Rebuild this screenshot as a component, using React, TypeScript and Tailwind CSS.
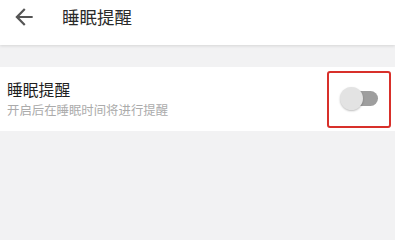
import React from "react"

const font = { fontFamily: '"Noto Sans CJK SC", "Noto Sans", sans-serif' }

const Header = () => (
  <div className="relative z-10 h-[45px] bg-white flex items-center shadow-[0_1px_3px_rgba(0,0,0,0.12)]">
    <svg
      viewBox="0 0 24 24"
      className="w-[26px] h-[26px] ml-[11px] -mt-[11px] text-[#555] fill-current"
    >
      <path d="M20 11H7.83l5.59-5.59L12 4l-8 8 8 8 1.41-1.41L7.83 13H20v-2z" />
    </svg>
    <div className="ml-[25px] -mt-[12px] text-[17.5px] leading-none text-[#2a2a2a]">
      睡眠提醒
    </div>
  </div>
)

const Switch = () => (
  <div className="relative w-[38px] h-[24px]">
    <div className="absolute left-[4px] right-0 top-[4px] h-[15px] rounded-full bg-[#9e9e9e]" />
    <div className="absolute left-0 top-0 w-[23px] h-[23px] rounded-full bg-[#e3e3e3] shadow-[0_1px_2px_rgba(0,0,0,0.25)]" />
  </div>
)

const App = () => {
  return (
    <div className="w-full min-h-screen bg-[#f2f2f3] overflow-hidden" style={font}>
      <Header />
      <div className="mt-[22px] h-[64px] bg-white flex items-center justify-between pl-[7px] pr-[4px]">
        <div className="flex flex-col">
          <div className="text-[15.8px] leading-none text-[#1f1f1f]">睡眠提醒</div>
          <div className="mt-[6px] text-[12.4px] leading-none text-[#ababab]">
            开启后在睡眠时间将进行提醒
          </div>
        </div>
        <div className="w-[64px] h-[57px] border-[2.5px] border-[#d8302a] rounded-[3px] flex items-center justify-center">
          <Switch />
        </div>
      </div>
    </div>
  )
}

export default App
